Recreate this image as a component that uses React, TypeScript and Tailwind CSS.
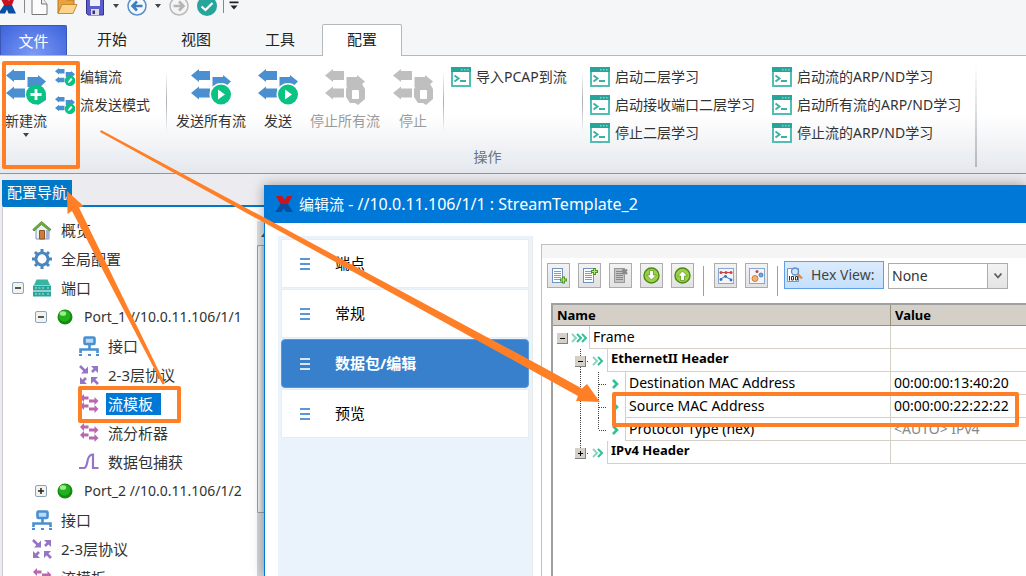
import { useState, ReactNode } from 'react';

type IconProps = { className?: string };

/* ---------- quick access icons ---------- */

function LogoX({ className }: IconProps) {
  return (
    <svg className={className} viewBox="0 0 20 18" aria-hidden="true">
      <path d="M1 0h7l3 4.500L13.500 0h6l-5 9H6z" fill="#c8141e" />
      <path d="M6 9h8.500l5.500 9h-8l-2-4-3 4H0z" fill="#0a4ea2" />
    </svg>
  );
}

function Caret({ className }: IconProps) {
  return (
    <svg className={className} viewBox="0 0 6 4" aria-hidden="true">
      <path d="M0 0h6L3 4z" fill="#444" />
    </svg>
  );
}

function QuickAccess() {
  return (
    <div className="flex h-6 items-start overflow-hidden">
      <svg width="16" height="14" viewBox="0 0 16 14" aria-hidden="true">
        <path d="M0 -3h7l2 4 2-4h4l-3 8H4z" fill="#c8141e" />
        <path d="M4 5h8l4 8.500H8.500L7 9.500 5 13.500H0V11z" fill="#0a4ea2" />
      </svg>
      <span className="ml-2 h-[13px] w-px bg-[#888]" />
      <button aria-label="新建" className="ml-1.5">
        <svg width="18" height="16" viewBox="0 0 18 16">
          <path d="M1 -4v18.500h15V4l-5-6" fill="#fcfcfc" stroke="#777" />
          <path d="M10.500 -2v6H16" fill="#eee" stroke="#777" />
        </svg>
      </button>
      <button aria-label="打开" className="ml-2">
        <svg width="21" height="16" viewBox="0 0 21 16">
          <path d="M1 -2h7l2 2h7v5H5L1 13z" fill="#e9a23b" stroke="#b87420" />
          <path d="M5 4.500h15l-4 9H1z" fill="#fcd58a" stroke="#c98a35" />
        </svg>
      </button>
      <button aria-label="保存" className="ml-2">
        <svg width="18" height="16" viewBox="0 0 18 16">
          <path d="M.5 -4h17v19H2L.5 13.500z" fill="#5c5ccc" stroke="#34348f" />
          <path d="M4 -4h10v10H4z" fill="#eef0fa" />
          <path d="M5 9h8v6H5z" fill="#dcdcec" />
          <path d="M6.500 10.500h2.500V14H6.500z" fill="#30308c" />
        </svg>
      </button>
      <Caret className="mt-1 ml-[9px] h-1 w-1.5" />
      <button aria-label="后退" className="ml-2">
        <svg width="20" height="16" viewBox="0 0 20 16">
          <circle cx="10" cy="6" r="9" fill="#f4f8fc" stroke="#5b8fc9" strokeWidth="1.500" />
          <path d="M15.500 6H6M10 1.500L5.500 6l4.500 4.500" fill="none" stroke="#3f7cc0" strokeWidth="2.600" />
        </svg>
      </button>
      <Caret className="mt-1 ml-2 h-1 w-1.5" />
      <button aria-label="前进" className="ml-2">
        <svg width="20" height="16" viewBox="0 0 20 16">
          <circle cx="10" cy="6" r="9" fill="#f4f4f4" stroke="#bbb" strokeWidth="1.500" />
          <path d="M4.500 6H14M10 1.500l4.500 4.500-4.500 4.500" fill="none" stroke="#b4b4b4" strokeWidth="2.600" />
        </svg>
      </button>
      <button aria-label="确认" className="ml-2">
        <svg width="20" height="16" viewBox="0 0 20 16">
          <circle cx="10" cy="6" r="10" fill="#26a69a" />
          <path d="M4.500 6.500L8.500 10l7-7" fill="none" stroke="#fff" strokeWidth="2.200" />
        </svg>
      </button>
      <span className="ml-[6px] h-[13px] w-px bg-[#888]" />
      <button aria-label="自定义快速访问" className="ml-[5px]">
        <svg width="10" height="12" viewBox="0 0 10 12">
          <path d="M.5 1.500h9v1.700h-9zM1.500 5.500h7L5 9.500z" fill="#222" />
        </svg>
      </button>
    </div>
  );
}

/* ---------- ribbon ---------- */

function FlowArrows({ color, badge, className }: { color: string; badge: ReactNode; className: string }) {
  return (
    <svg className={className} viewBox="0 0 40 36" aria-hidden="true">
      <g fill={color}>
        <path d="M0 6.500L8 0v2h11v9H8v2z" />
        <path d="M0 24L8 17.500v2h11v9H8v2z" />
        <path d="M40 12.500L32 6v2H21.500v10H32v2z" />
      </g>
      {badge}
    </svg>
  );
}

const BLUE = '#4a90d0';
const GREEN = '#0ac282';

const addBadge = (
  <>
    <path d="M22 27l10-7 8 7v4l-8 5z" fill={BLUE} />
    <circle cx="30" cy="25.500" r="10" fill={GREEN} />
    <path d="M30 20v11M24.500 25.500h11" stroke="#fff" strokeWidth="2.800" />
  </>
);

const playBadge = (
  <>
    <circle cx="30" cy="25.500" r="11.500" fill="#fff" />
    <circle cx="30" cy="25.500" r="10" fill={GREEN} />
    <path d="M27 20.500l7 5-7 5z" fill="#fff" />
  </>
);

const stopBadge = (
  <>
    <path d="M24 15h13l3 5v10l-7 6-3-2h-5l-4-6v-8z" fill="#bfbfbf" />
    <rect x="27" y="21" width="7" height="9" rx="1" fill="#fff" />
  </>
);

const editBadge = (
  <>
    <circle cx="30" cy="25.500" r="10.500" fill={GREEN} />
    <path d="M26 30l1-4 5-6 3 2.500-5 6z" fill="#fff" />
  </>
);

function ConsoleIcon() {
  return (
    <svg className="h-5 w-5 shrink-0" viewBox="0 0 20 20" aria-hidden="true">
      <rect x="1" y="1" width="18" height="18" fill="#fff" stroke="#54bdb3" strokeWidth="2" />
      <path d="M0 0h20v5H0z" fill="#26a69a" />
      <path d="M10 2h1.500v1.500H10zM13 2h1.500v1.500H13zM16 2h1.500v1.500H16z" fill="#7fd0c8" />
      <path d="M3.500 8.500l4 3-4 3M9 14h6" fill="none" stroke="#3cb1a6" strokeWidth="2" />
    </svg>
  );
}

interface BigButtonProps {
  label: string;
  badge: ReactNode;
  width: string;
  disabled?: boolean;
  children?: ReactNode;
}

function BigButton({ label, badge, width, disabled, children }: BigButtonProps) {
  return (
    <button disabled={disabled} className={`flex flex-col items-center pt-1.5 ${width} ${disabled ? 'text-[#9a9a9a]' : 'text-[#333]'}`}>
      <FlowArrows className="h-9 w-10" color={disabled ? '#bfbfbf' : BLUE} badge={badge} />
      <span className="mt-1.5 text-sm leading-5 whitespace-nowrap">{label}</span>
      {children}
    </button>
  );
}

function SmallButton({ label, icon }: { label: string; icon: ReactNode }) {
  return (
    <button className="flex h-7 items-center gap-[5px] text-sm whitespace-nowrap text-[#333]">
      {icon}
      {label}
    </button>
  );
}

function Separator() {
  return <span className="mt-2 h-[62px] w-px shrink-0 bg-linear-to-b from-transparent via-[#a9acb2] to-transparent" />;
}

const learnL2 = ['启动二层学习', '启动接收端口二层学习', '停止二层学习'];
const learnArp = ['启动流的ARP/ND学习', '启动所有流的ARP/ND学习', '停止流的ARP/ND学习'];

function Ribbon() {
  return (
    <div className="border-b border-[#8f9799] bg-linear-to-b from-white from-50% to-[#e4e8ed]">
      <div className="flex">
        <section className="w-[975px] shrink-0 pt-[7px] pb-1.5">
          <div className="flex h-[84px] items-start">
            <BigButton label="新建流" badge={addBadge} width="w-[52px]">
              <Caret className="mt-0.5 h-1 w-1.5" />
            </BigButton>
            <div className="ml-[3px] w-[111px]">
              {['编辑流', '流发送模式'].map(label => (
                <SmallButton
                  key={label}
                  label={label}
                  icon={<FlowArrows className="h-[18px] w-5" color={BLUE} badge={editBadge} />}
                />
              ))}
            </div>
            <Separator />
            <div className="ml-1 flex w-[272px]">
              <BigButton label="发送所有流" badge={playBadge} width="w-20" />
              <BigButton label="发送" badge={playBadge} width="w-[54px]" />
              <BigButton label="停止所有流" badge={stopBadge} width="w-20" disabled />
              <BigButton label="停止" badge={stopBadge} width="w-14" disabled />
            </div>
            <Separator />
            <div className="ml-[7px] w-[131px]">
              <SmallButton label="导入PCAP到流" icon={<ConsoleIcon />} />
            </div>
            <Separator />
            <div className="ml-[7px] w-[182px]">
              {learnL2.map(label => (
                <SmallButton key={label} label={label} icon={<ConsoleIcon />} />
              ))}
            </div>
            <div>
              {learnArp.map(label => (
                <SmallButton key={label} label={label} icon={<ConsoleIcon />} />
              ))}
            </div>
          </div>
          <p className="text-center text-sm leading-5 text-[#6b7280]">操作</p>
        </section>
        <span className="my-1.5 w-0.5 bg-linear-to-b from-transparent to-[#b5b8bd]" />
      </div>
    </div>
  );
}

const tabs = ['开始', '视图', '工具'];

function RibbonTabs() {
  return (
    <nav className="flex h-8 border-b border-[#b4b7bb] text-[15px] text-[#222]">
      <button className="mt-px w-[67px] rounded-tr-xs border border-b-0 border-[#3a57b8] bg-radial-[at_50%_100%] from-[#7d9bf5] to-[#3c63dc] pt-0.5 text-white">
        文件
      </button>
      <div className="ml-[3px] flex">
        {tabs.map(tab => (
          <button key={tab} className="w-[84px]">{tab}</button>
        ))}
      </div>
      <button className="-mb-px w-20 rounded-t-xs border border-b-0 border-[#b4b7bb] bg-white pb-0.5">配置</button>
    </nav>
  );
}

/* ---------- navigation tree ---------- */

function HouseIcon() {
  return (
    <svg className="h-5 w-5" viewBox="0 0 20 20" aria-hidden="true">
      <path d="M4 9l6-6 7 6v10H4z" fill="#eef0f8" stroke="#8a94b8" />
      <path d="M7.500 10.500h5V19h-5z" fill="#c77f3a" stroke="#8f5520" />
      <path d="M14 10h3v9h-3z" fill="#a7b3d8" />
      <path d="M.8 9.500L9.500 1.500l9.500 8-1.500 1.200-8-6.200-7.500 6.500z" fill="#6fae3c" stroke="#4b8523" strokeWidth=".8" />
    </svg>
  );
}

function GearIcon() {
  return (
    <svg className="h-5 w-5" viewBox="0 0 20 20" aria-hidden="true">
      <g stroke="#4a86c0" fill="none">
        <path d="M10 0v20M0 10h20M3 3l14 14M17 3L3 17" strokeWidth="3" />
        <circle cx="10" cy="10" r="6" fill="#fff" strokeWidth="3.200" />
      </g>
      <circle cx="10" cy="10" r="4.400" fill="#fff" />
    </svg>
  );
}

function ServerIcon() {
  return (
    <svg className="h-5 w-5" viewBox="0 0 20 20" aria-hidden="true">
      <path d="M4.500 1.500h11L18 7H2z" fill="#39b3a3" />
      <path d="M1 7.500h18v5H1zM1 13.500h18v5H1z" fill="#26a69a" />
      <path d="M3 10h10M3 16h10M15 10h2M15 16h2" stroke="#b5e6df" strokeDasharray="2 1.500" />
    </svg>
  );
}

function BallIcon() {
  return (
    <svg className="h-4 w-4" viewBox="0 0 16 16" aria-hidden="true">
      <circle cx="8" cy="8" r="7.500" fill="#138a10" />
      <circle cx="7.500" cy="7" r="5.800" fill="#22b11c" />
      <ellipse cx="6" cy="4.500" rx="3.200" ry="2.300" fill="#9aee8c" />
    </svg>
  );
}

function PortIcon() {
  return (
    <svg className="h-5 w-5" viewBox="0 0 20 20" aria-hidden="true">
      <g fill="none" stroke="#4a90d0" strokeWidth="2.600">
        <rect x="5.500" y="1.500" width="10" height="6.500" rx="1" fill="#b9dbf7" />
        <path d="M10.500 8v5M1.500 17v-3.500h17V17" />
      </g>
      <path d="M0 18h3v2H0zM9 18h3v2H9zM17 18h3v2h-3z" fill="#4a90d0" />
    </svg>
  );
}

function ProtocolIcon() {
  return (
    <svg className="h-5 w-5" viewBox="0 0 20 20" aria-hidden="true">
      <g stroke="#9575c4" strokeWidth="2.600">
        <path d="M1 1l5 5M13 7l4-4M3 17l4-4M19 19l-5-5" />
      </g>
      <path d="M9 1.500v7H2zM12 1h7v7zM1 12v7h7zM12 12h7l-7 7z" fill="#9575c4" />
    </svg>
  );
}

function StreamIcon() {
  return (
    <svg className="h-5 w-5" viewBox="0 0 20 20" aria-hidden="true">
      <g fill="#b867b0">
        <path d="M1 4l4-4v2.500h4.500v3H5V8z" />
        <path d="M1 12l4-4v2.500h4.500v3H5V16z" />
        <path d="M19.500 7l-4-4v2.500H10v3h5.500V11z" />
        <path d="M19.500 15l-4-4v2.500H10v3h5.500V19z" />
      </g>
    </svg>
  );
}

function WaveIcon() {
  return (
    <svg className="h-5 w-5" viewBox="0 0 20 20" aria-hidden="true">
      <path d="M0 16h5c3 0 3-6 4-9s2-4.500 5-4.500V16h5.500" fill="none" stroke="#9575c4" strokeWidth="2.200" />
    </svg>
  );
}

interface TreeNode {
  id: string;
  label: string;
  level: 0 | 1 | 2;
  icon: ReactNode;
  expander?: 'open' | 'closed';
}

const treeNodes: TreeNode[] = [
  { id: 'overview', label: '概览', level: 0, icon: <HouseIcon /> },
  { id: 'global', label: '全局配置', level: 0, icon: <GearIcon /> },
  { id: 'ports', label: '端口', level: 0, icon: <ServerIcon />, expander: 'open' },
  { id: 'port1', label: 'Port_1 //10.0.11.106/1/1', level: 1, icon: <BallIcon />, expander: 'open' },
  { id: 'p1-if', label: '接口', level: 2, icon: <PortIcon /> },
  { id: 'p1-proto', label: '2-3层协议', level: 2, icon: <ProtocolIcon /> },
  { id: 'p1-stream', label: '流模板', level: 2, icon: <StreamIcon /> },
  { id: 'p1-analyzer', label: '流分析器', level: 2, icon: <StreamIcon /> },
  { id: 'p1-capture', label: '数据包捕获', level: 2, icon: <WaveIcon /> },
  { id: 'port2', label: 'Port_2 //10.0.11.106/1/2', level: 1, icon: <BallIcon />, expander: 'closed' },
  { id: 'if', label: '接口', level: 0, icon: <PortIcon /> },
  { id: 'proto', label: '2-3层协议', level: 0, icon: <ProtocolIcon /> },
  { id: 'stream', label: '流模板', level: 0, icon: <StreamIcon /> },
];

// port names are set one step smaller than the other entries
const levelStyle = ['pl-[9px] text-[15px]', 'pl-8 text-sm', 'pl-14 text-[15px]'];

function NavTree() {
  const [selected, setSelected] = useState('p1-stream');

  return (
    <ul className="min-w-0 flex-1 pt-2 text-[#333]">
      {treeNodes.map(node => (
        <li key={node.id} className={`flex h-[29px] items-center ${levelStyle[node.level]}`}>
          <span className="flex w-5 shrink-0">
            {node.expander && (
              <button aria-label="展开/折叠" className="h-3 w-3 rounded-xs border border-[#8fa3b8] bg-[#f2f2ee]">
                <svg className="h-2.5 w-2.5" viewBox="0 0 10 10">
                  <path d={node.expander === 'open' ? 'M2 5h6' : 'M2 5h6M5 2v6'} stroke="#222" strokeWidth="1.500" />
                </svg>
              </button>
            )}
          </span>
          <span className="flex w-5 shrink-0 justify-center">{node.icon}</span>
          <button
            onClick={() => setSelected(node.id)}
            className={`ml-[7px] h-[22px] px-0.5 leading-[22px] whitespace-nowrap ${selected === node.id ? 'bg-[#0078d7] pr-2 text-white' : ''}`}
          >
            {node.label}
          </button>
        </li>
      ))}
    </ul>
  );
}

function NavPanel() {
  return (
    <aside className="flex w-[264px] shrink-0 flex-col pt-1.5 pl-0.5">
      <h2 className="w-[70px] bg-[#0078c8] pl-[5px] text-[15px] leading-[25px] whitespace-nowrap text-white">配置导航</h2>
      <div className="flex min-h-0 flex-1 overflow-hidden border-t-2 border-l border-t-[#0078c8] border-l-[#c9ccd6] bg-white">
        <NavTree />
        <div className="mt-3.5 flex w-[7px] flex-col bg-[#cfd3d8]">
          <div className="h-6 bg-[#dfe1e4] pt-3 pl-1">
            <Caret className="h-1 w-1.5 rotate-180" />
          </div>
          <div className="h-[268px] rounded-l-xs border border-r-0 border-[#9a9da3] bg-linear-to-r from-[#f4f5f6] to-[#cdd0d4]" />
          <div className="flex-1 bg-[#d3d6da]" />
        </div>
      </div>
    </aside>
  );
}

/* ---------- stream editor window ---------- */

const steps = ['端点', '常规', '数据包/编辑', '预览'];

function StepList() {
  const [active, setActive] = useState(2);

  return (
    <div className="w-[255px] shrink-0 border-r border-[#e8eaec] bg-[#eaf3fb] px-[3px] pt-[3px]">
      <ul className="flex flex-col gap-px">
        {steps.map((step, i) => (
          <li key={step}>
            <button
              onClick={() => setActive(i)}
              className={`flex h-[49px] w-full items-center gap-[25px] border pl-[18px] text-[15px] ${
                i === active
                  ? 'rounded border-[#5b97d6] bg-[#3880cc] font-bold text-white'
                  : 'border-[#ececec] bg-white text-black'
              }`}
            >
              <svg className="h-3 w-2.5" viewBox="0 0 10 12" aria-hidden="true">
                <path d="M0 0h10v2H0zM0 5h10v2H0zM0 10h10v2H0z" fill={i === active ? '#d7e6f6' : '#5b97d6'} />
              </svg>
              {step}
            </button>
          </li>
        ))}
      </ul>
    </div>
  );
}

function DocIcon({ variant }: { variant: 'append' | 'insert' | 'delete' }) {
  const gray = variant === 'delete';
  const plusY = variant === 'append' ? 12 : 3.5;
  return (
    <svg className="h-4 w-4" viewBox="0 0 16 16" aria-hidden="true">
      <rect x="1.500" y="0.500" width="10" height="14" fill={gray ? '#c4c4c4' : '#fff'} stroke={gray ? '#999' : '#6f93c4'} />
      <path d="M3 3.500h7M3 5.500h7M3 7.500h7M3 9.500h7M3 11.500h7" stroke={gray ? '#888' : '#7d9cc8'} />
      {gray ? (
        <path d="M9.500 1.500l4.500 4.500M14 1.500L9.500 6" stroke="#888" strokeWidth="2.400" />
      ) : (
        <>
          <path d={`M9 ${plusY}h7M12.500 ${plusY - 3.5}v7`} stroke="#4c9620" strokeWidth="3" />
          <path d={`M10 ${plusY}h5M12.500 ${plusY - 2.5}v5`} stroke="#b8e07a" strokeWidth="1.200" />
        </>
      )}
    </svg>
  );
}

function RoundArrow({ up }: { up?: boolean }) {
  return (
    <svg className={`h-[17px] w-[17px] ${up ? 'rotate-180' : ''}`} viewBox="0 0 17 17" aria-hidden="true">
      <circle cx="8.500" cy="8.500" r="7.500" fill="#9bd048" stroke="#4c8a14" strokeWidth="1.400" />
      <path d="M6.500 3.500h4V8h3l-5 5-5-5h3z" fill="#fff" stroke="#5a9a1c" strokeWidth=".8" />
    </svg>
  );
}

function ChartIcon() {
  return (
    <svg className="h-4 w-4" viewBox="0 0 16 16" aria-hidden="true">
      <rect x="0.500" y="0.500" width="15" height="15" fill="#f2f6fc" stroke="#8ba6d0" />
      <path d="M2 4.500h12" stroke="#d04040" />
      <path d="M2 12l5-4 3 2 4 2" fill="none" stroke="#3b6fb5" />
      <g fill="#d04040"><circle cx="3" cy="4.500" r="1.500" /><circle cx="8" cy="4.500" r="1.500" /><circle cx="13" cy="4.500" r="1.500" /></g>
      <g fill="#3b6fb5"><circle cx="3" cy="11.500" r="1.400" /><circle cx="7.500" cy="8.500" r="1.400" /><circle cx="13" cy="12" r="1.400" /></g>
    </svg>
  );
}

function BubbleIcon() {
  return (
    <svg className="h-4 w-4" viewBox="0 0 16 16" aria-hidden="true">
      <rect x="0.500" y="0.500" width="15" height="15" fill="#f2f6fc" stroke="#8ba6d0" />
      <circle cx="8" cy="3.500" r="1.500" fill="#d04040" />
      <circle cx="12" cy="7" r="2" fill="#7fa6d8" stroke="#3b6fb5" strokeWidth=".8" />
      <circle cx="6" cy="10.500" r="3" fill="#f2b36a" stroke="#c0702a" strokeWidth=".8" />
    </svg>
  );
}

function HexIcon() {
  return (
    <svg className="h-4 w-4" viewBox="0 0 16 16" aria-hidden="true">
      <path d="M.5 1.500h11v13H.5z" fill="#fff" stroke="#7e94b4" />
      <path d="M2.500 9v4.500M4.500 9.500h2v3.500h-2zM8.500 9.500h2v3.500h-2z" fill="none" stroke="#333" />
      <circle cx="8" cy="4.500" r="3.500" fill="#cfe4fa" stroke="#5b8fc9" strokeWidth="1.300" />
      <path d="M11 7.500l4 4" stroke="#e08a3a" strokeWidth="2.400" />
    </svg>
  );
}

function ToolButton({ label, children }: { label: string; children: ReactNode }) {
  return (
    <button aria-label={label} className="flex h-[25px] w-[23px] items-center justify-center border border-[#acacac] bg-linear-to-b from-[#f3f3f3] to-[#e2e2e2]">
      {children}
    </button>
  );
}

function Toolbar() {
  return (
    <div className="flex h-[45px] items-start pt-[3px] pl-[5px]">
      <div className="mt-0.5 flex gap-2">
        <ToolButton label="Append"><DocIcon variant="append" /></ToolButton>
        <ToolButton label="Insert"><DocIcon variant="insert" /></ToolButton>
        <ToolButton label="Delete"><DocIcon variant="delete" /></ToolButton>
        <ToolButton label="Move down"><RoundArrow /></ToolButton>
        <ToolButton label="Move up"><RoundArrow up /></ToolButton>
      </div>
      <span className="mt-[5px] ml-[9px] h-[30px] w-px bg-[#a0a0a0]" />
      <div className="mt-0.5 ml-2.5 flex gap-2">
        <ToolButton label="Chart"><ChartIcon /></ToolButton>
        <ToolButton label="Bubbles"><BubbleIcon /></ToolButton>
      </div>
      <span className="mt-[5px] ml-[9px] h-[30px] w-px bg-[#a0a0a0]" />
      <label
        htmlFor="hex-view"
        className="ml-1.5 flex h-7 w-[100px] items-center gap-2 border border-[#5e9fe8] bg-linear-to-b from-[#dcebfc] to-[#c4e0fc] pl-0.5 text-sm whitespace-nowrap text-[#444]"
      >
        <HexIcon />
        Hex View:
      </label>
      <div className="relative mt-0.5 ml-1">
        <select id="hex-view" className="h-[26px] w-[120px] appearance-none border border-[#acacac] bg-white pl-[3px] text-sm text-[#333]">
          <option>None</option>
          <option>Hex</option>
        </select>
        <span className="pointer-events-none absolute inset-y-0 right-0 flex w-[21px] items-center justify-center border border-[#acacac] bg-linear-to-b from-[#f3f3f3] to-[#e4e4e4]">
          <svg className="h-1.5 w-2" viewBox="0 0 8 6"><path d="M.5 .5L4 4.500 7.500 .5" fill="none" stroke="#606060" strokeWidth="1.800" /></svg>
        </span>
      </div>
    </div>
  );
}

type Glyph = 'blank' | 'line' | 'tee' | 'elbow' | 'plus' | 'minus' | 'minusTop';

const connector: Record<Glyph, string> = {
  blank: '',
  line: 'M9.500 0v23',
  tee: 'M9.500 0v23M9.500 12.500H18',
  elbow: 'M9.500 0v12M9.500 12.500H18',
  plus: 'M9.500 0v12M9.500 12.500H18',
  minus: 'M9.500 0v23M9.500 12.500H18',
  minusTop: '',
};

function TreeCell({ glyph }: { glyph: Glyph }) {
  const boxed = glyph === 'plus' || glyph === 'minus' || glyph === 'minusTop';
  return (
    <svg className="h-[23px] w-[18px] shrink-0" viewBox="0 0 18 23" shapeRendering="crispEdges" aria-hidden="true">
      <path d={connector[glyph]} stroke="#444" strokeDasharray="1 1" fill="none" />
      {boxed && (
        <>
          <path d="M4 7h11v11H4z" fill="#d4d0c8" />
          <path d="M4 17.500h10.500V7" fill="none" stroke="#808080" />
          <path d={glyph === 'plus' ? 'M7 12.500h5M9.500 10v5' : 'M7 12.500h5'} stroke="#000" />
        </>
      )}
    </svg>
  );
}

function Chevrons({ count }: { count: number }) {
  const shifts = count === 3 ? [1, 6, 11] : count === 2 ? [4, 9] : [6];
  return (
    <svg className="h-[23px] w-[18px] shrink-0" viewBox="0 0 18 23" aria-hidden="true">
      {shifts.map((x, i) => (
        <path
          key={x}
          d={`M${x} 8l4 4-4 4`}
          fill="none"
          stroke={count > 1 && i === 0 ? '#8fd3c4' : '#2fc096'}
          strokeWidth={count === 1 ? 2.6 : 2}
        />
      ))}
    </svg>
  );
}

interface Field {
  name: string;
  value?: string;
  cells: Glyph[];
  chevrons: number;
  header?: boolean;
  auto?: boolean;
}

const fields: Field[] = [
  { name: 'Frame', cells: ['minusTop'], chevrons: 3 },
  { name: 'EthernetII Header', cells: ['blank', 'minus'], chevrons: 2, header: true },
  { name: 'Destination MAC Address', value: '00:00:00:13:40:20', cells: ['blank', 'line', 'tee'], chevrons: 1 },
  { name: 'Source MAC Address', value: '00:00:00:22:22:22', cells: ['blank', 'line', 'tee'], chevrons: 1 },
  { name: 'Protocol Type (hex)', value: '<AUTO> IPv4', cells: ['blank', 'line', 'elbow'], chevrons: 1, auto: true },
  { name: 'IPv4 Header', cells: ['blank', 'plus'], chevrons: 2, header: true },
];

function FieldTable() {
  return (
    <div className="ml-[9px] flex-1 border-t-2 border-l-2 border-[#a0a0a0]">
      <table className="w-full table-fixed border-separate border-spacing-0 text-sm text-black">
        <thead>
          <tr className="h-[21px] bg-[#d4d0c8] text-left text-[13px] leading-5">
            <th className="w-[338px] border-r border-b border-[#9b9178] p-0 pl-1">Name</th>
            <th className="border-b border-[#9b9178] p-0 pl-1">Value</th>
          </tr>
        </thead>
        <tbody>
          {fields.map(field => (
            <tr key={field.name} className="h-[23px]">
              <td className="border-r border-[#d4d0c8] p-0">
                <div className="flex h-[23px]">
                  {field.cells.map((glyph, i) => (
                    <TreeCell key={i} glyph={glyph} />
                  ))}
                  <Chevrons count={field.chevrons} />
                  <span
                    className={`flex-1 border-b border-l border-[#d4d0c8] pl-[3px] whitespace-nowrap ${
                      field.header ? 'text-[13px] leading-[19px] font-bold' : 'leading-[22px]'
                    }`}
                  >
                    {field.name}
                  </span>
                </div>
              </td>
              <td className={`border-b border-[#d4d0c8] p-0 pl-[3px] leading-[22px] ${field.auto ? 'text-[#888]' : ''}`}>
                {field.value}
              </td>
            </tr>
          ))}
        </tbody>
      </table>
    </div>
  );
}

function StreamEditor() {
  return (
    <main className="mt-[11px] flex min-w-0 flex-1 flex-col border-l border-[#0078d7] bg-white shadow-[0_0_12px_rgba(0,0,0,0.35)]">
      <header className="flex h-[38px] shrink-0 items-center gap-1.5 bg-[#0078d7] pl-2.5 text-white">
        <LogoX className="h-4 w-[18px]" />
        <h1 className="text-[15px] whitespace-nowrap">
          编辑流<span className="text-base"> - //10.0.11.106/1/1 : StreamTemplate_2</span>
        </h1>
      </header>
      <div className="flex min-h-0 flex-1 pt-[13px] pl-[13px]">
        <StepList />
        <div className="mt-[8px] ml-2 flex min-w-0 flex-1 flex-col border-t border-l border-[#c0c0c0]">
          <div className="h-[13px] shrink-0 bg-[#f5f5f5]" />
          <Toolbar />
          <FieldTable />
        </div>
      </div>
    </main>
  );
}

/* ---------- orange markup drawn over the windows ---------- */

function Annotations() {
  return (
    <svg className="pointer-events-none absolute top-0 left-0" width="1026" height="576" viewBox="0 0 1026 576" aria-hidden="true">
      <g fill="none" stroke="#ff7f27" strokeWidth="4" strokeLinejoin="round">
        <rect x="4" y="63" width="74" height="104" />
        <rect x="80" y="388" width="99" height="33" />
        <rect x="614" y="394" width="403" height="31" />
      </g>
      <g fill="#ff7f27">
        <path d="M101 130L540 365.500 582 388.500 587 384 600 402 576 401 578 396 540 375 100 132z" />
        <path d="M165 383.500L79 207.500 83.500 206 67 191 67.500 214 72 211 162.500 384.500z" />
      </g>
    </svg>
  );
}

export default function App() {
  return (
    <div className="relative flex h-screen flex-col overflow-hidden bg-[#f5f6f7] font-['Noto_Sans','Noto_Sans_CJK_SC',sans-serif]">
      <QuickAccess />
      <RibbonTabs />
      <Ribbon />
      <div className="flex min-h-0 flex-1 bg-[#ebebf0]">
        <NavPanel />
        <StreamEditor />
      </div>
      <Annotations />
    </div>
  );
}
